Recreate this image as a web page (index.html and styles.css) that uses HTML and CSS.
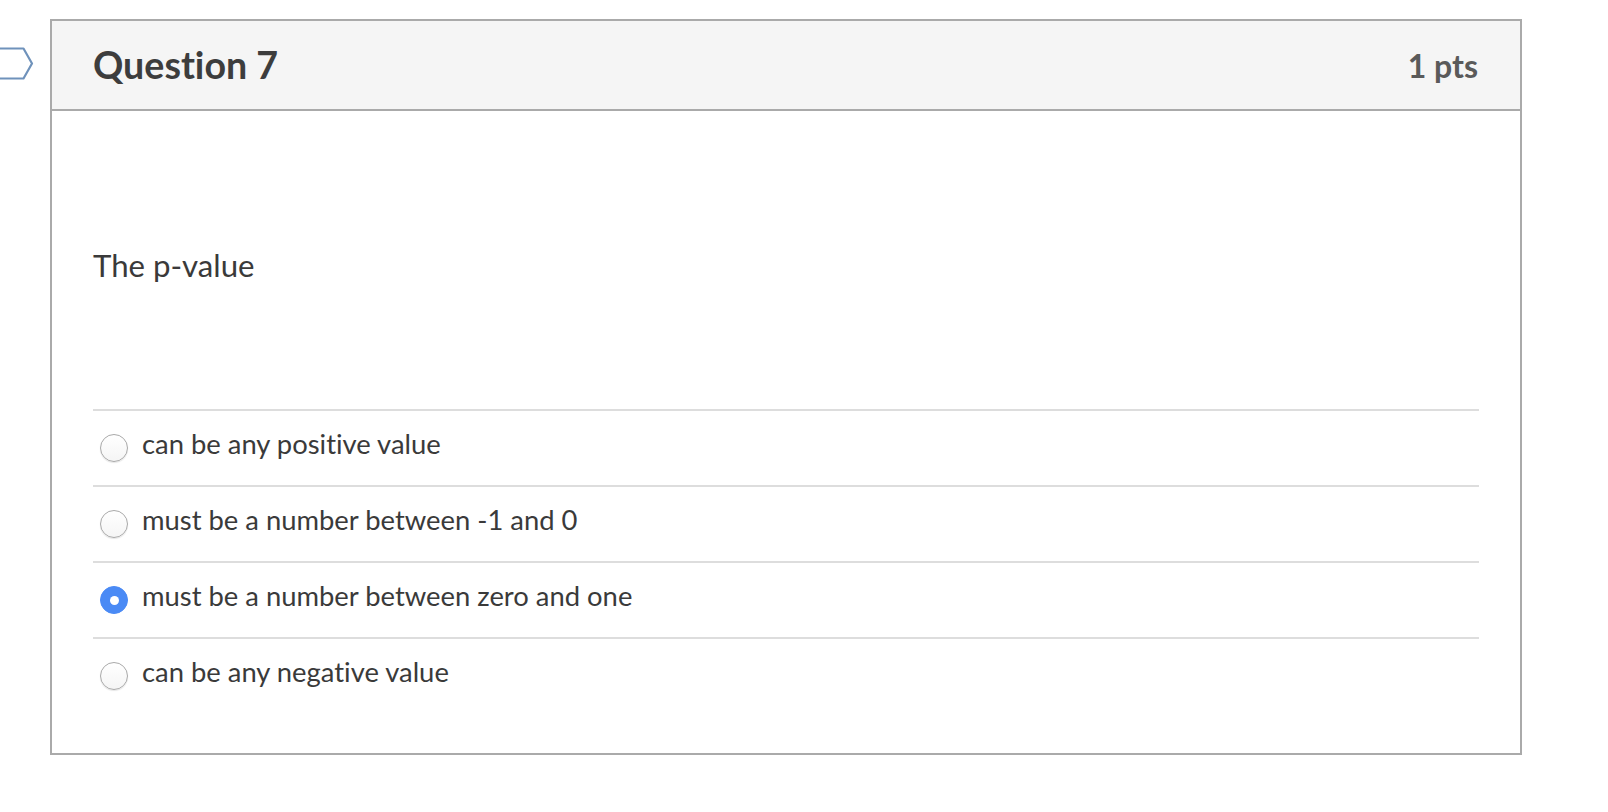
FILE: index.html
```html
<!DOCTYPE html>
<html lang="en">
<head>
<meta charset="utf-8">
<title>Question 7</title>
<link rel="stylesheet" href="styles.css">
</head>
<body>
<div class="page">
  <div class="flag-col">
    <svg class="flag" width="50" height="34" viewBox="0 0 50 34" aria-hidden="true">
      <path d="M-10 1.5 H23.5 L32 16.5 L23.5 31.5 H-10" fill="none" stroke="#6f92bb" stroke-width="2.2" stroke-linejoin="round"/>
    </svg>
  </div>
  <div class="card">
    <div class="card-header">
      <h2 class="q-title">Question 7</h2>
      <div class="q-points">1 pts</div>
    </div>
    <div class="card-body">
      <p class="q-text">The p-value</p>
      <div class="answers">
        <label class="answer">
          <span class="radio"></span>
          <span class="answer-text">can be any positive value</span>
        </label>
        <label class="answer">
          <span class="radio"></span>
          <span class="answer-text">must be a number between -1 and 0</span>
        </label>
        <label class="answer">
          <span class="radio checked"></span>
          <span class="answer-text">must be a number between zero and one</span>
        </label>
        <label class="answer">
          <span class="radio"></span>
          <span class="answer-text">can be any negative value</span>
        </label>
      </div>
    </div>
  </div>
</div>
</body>
</html>
```
FILE: styles.css
```css
html, body {
  margin: 0;
  padding: 0;
  background: #ffffff;
}

body {
  font-family: "Lato", "Open Sans", "Liberation Sans", sans-serif;
  color: #3a3a3a;
  font-variant-ligatures: none;
  font-feature-settings: "liga" 0, "clig" 0;
}

.page {
  display: flex;
  align-items: flex-start;
  padding-top: 19px;
}

.flag-col {
  width: 50px;
  flex: 0 0 50px;
  padding-top: 28px;
}

.flag {
  display: block;
}

.card {
  width: 1468px;
  border: 2px solid #aaaaaa;
}

.card-header {
  height: 88px;
  background: #f5f5f5;
  border-bottom: 2px solid #aaaaaa;
  display: flex;
  align-items: center;
  justify-content: space-between;
  padding: 0 42px 0 41px;
}

.q-title {
  margin: 0;
  font-size: 37.6px;
  font-weight: 700;
  color: #3d3d3d;
  line-height: 1;
}

.q-points {
  font-size: 32px;
  font-weight: 700;
  color: #5a5a5a;
  line-height: 1;
  margin-top: 2px;
}

.card-body {
  padding: 0 41px 40px 41px;
}

.q-text {
  margin: 0;
  padding: 130px 0 120px 0;
  font-size: 31.2px;
  line-height: 48px;
  color: #3a3a3a;
}

.answers {
  display: flex;
  flex-direction: column;
}

.answer {
  height: 74px;
  border-top: 2px solid #dddddd;
  display: flex;
  align-items: center;
  padding-left: 7px;
  gap: 14px;
}

.radio {
  width: 26px;
  height: 26px;
  border-radius: 50%;
  border: 1px solid #a9a9a9;
  background: linear-gradient(#ffffff, #f5f5f5);
  box-shadow: 0 1px 1px rgba(0, 0, 0, 0.1);
  flex: 0 0 auto;
  display: flex;
  align-items: center;
  justify-content: center;
  margin-top: 0;
}

.radio.checked {
  border-color: #4a8af5;
  background: #4a8af5;
  box-shadow: none;
}

.radio.checked::after {
  content: "";
  width: 9px;
  height: 9px;
  border-radius: 50%;
  background: #ffffff;
}

.answer-text {
  font-size: 27.4px;
  line-height: 32px;
  padding-bottom: 8px;
  color: #3a3a3a;
}
```
